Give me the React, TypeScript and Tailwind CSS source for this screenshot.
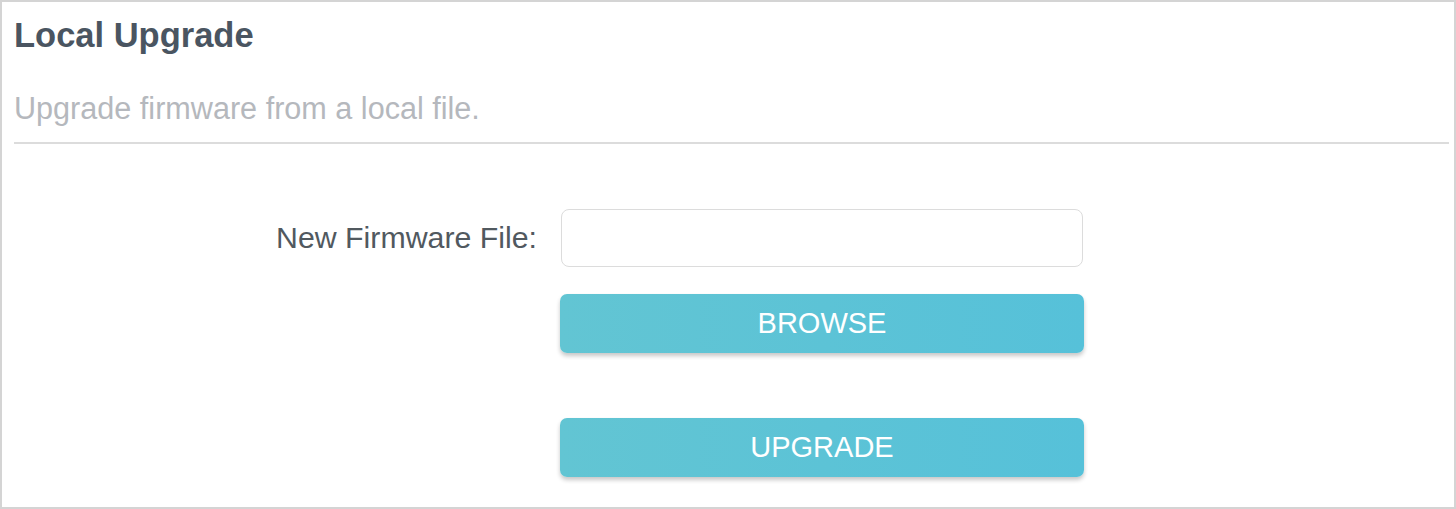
import React from "react";

const App = () => {
  return (
    <div className="w-[1456px] h-[509px] bg-white border-2 border-[#d4d4d4] font-['Liberation_Sans',Arial,sans-serif] overflow-hidden">
      <div className="pl-[12px] pr-[5px] pt-[13px]">
        {/* header */}
        <h1 className="text-[34.5px] leading-[40px] font-bold text-[#4a5561]">
          Local Upgrade
        </h1>
        <p className="mt-[36px] text-[30.6px] leading-[34px] text-[#b5b8bd]">
          Upgrade firmware from a local file.
        </p>
        <div className="mt-[17px] h-[2px] bg-[#dcdcdc]" />

        {/* form */}
        <div className="mt-[65px] flex">
          <div className="w-[546px] shrink-0 h-[58px] flex items-center justify-end pr-[23px]">
            <label className="text-[30.3px] leading-[34px] text-[#51595f]">
              New Firmware File:
            </label>
          </div>
          <div className="w-[524px] flex flex-col">
            <input
              type="text"
              className="ml-[1px] w-[522px] h-[58px] border border-[#dcdcdc] rounded-[8px] bg-white outline-none px-3 text-[24px]"
            />
            <button className="mt-[27px] h-[59px] w-[524px] rounded-[7px] bg-linear-to-r from-[#62c5d3] to-[#56c1d9] text-white text-[29px] leading-none shadow-[0_3px_4px_rgba(0,0,0,0.22)]">
              BROWSE
            </button>
            <button className="mt-[65px] h-[59px] w-[524px] rounded-[7px] bg-linear-to-r from-[#62c5d3] to-[#56c1d9] text-white text-[29px] leading-none shadow-[0_3px_4px_rgba(0,0,0,0.22)]">
              UPGRADE
            </button>
          </div>
        </div>
      </div>
    </div>
  );
};

export default App;
